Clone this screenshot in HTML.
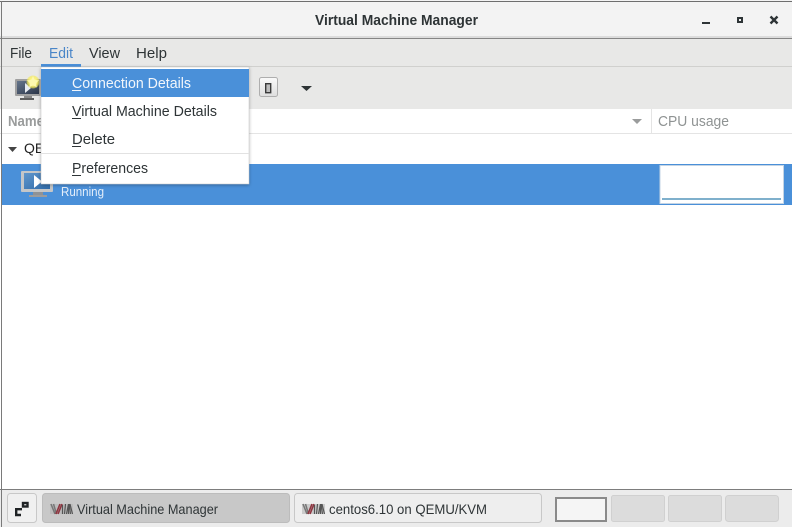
<!DOCTYPE html>
<html><head><meta charset="utf-8"><style>
html,body{margin:0;padding:0;background:#fff;width:792px;height:527px;overflow:hidden}
svg{display:block}
text{font-family:"Liberation Sans",sans-serif;font-size:15px}
</style></head><body>
<svg width="792" height="527" viewBox="0 0 792 527" xmlns="http://www.w3.org/2000/svg">
<defs>
<linearGradient id="scr" x1="0" y1="0" x2="1" y2="1"><stop offset="0" stop-color="#5f96cc"/><stop offset="1" stop-color="#2f6aa8"/></linearGradient>
<linearGradient id="scr2" x1="0" y1="0" x2="1" y2="1"><stop offset="0" stop-color="#66768c"/><stop offset="1" stop-color="#2b3548"/></linearGradient>
<linearGradient id="btn" x1="0" y1="0" x2="0" y2="1"><stop offset="0" stop-color="#fafafa"/><stop offset="1" stop-color="#dedede"/></linearGradient>
<radialGradient id="glow"><stop offset="0" stop-color="#fffde0"/><stop offset=".6" stop-color="#fbf27a"/><stop offset="1" stop-color="#f3e84a" stop-opacity=".5"/></radialGradient>
<filter id="sh" x="-10%" y="-10%" width="120%" height="120%"><feDropShadow dx="0" dy="1" stdDeviation="1.500" flood-color="#000" flood-opacity=".3"/></filter>
<filter id="bl"><feGaussianBlur stdDeviation=".3"/></filter>
<g id="logo" filter="url(#bl)">
<rect x="0" y="0" width="23" height="10" fill="#b4b4b4" opacity=".6"/>
<path d="M1 0l4 10M3.500 0l3 10" stroke="#777" stroke-width="1.500" fill="none"/>
<path d="M6 10l4-10M8 10l4-10" stroke="#8f3540" stroke-width="1.600" fill="none"/>
<path d="M12.500 10V1M14.500 10l1-10M16.500 10l2-10M18.500 10V1M20.500 10l-1.500-10M22.500 10L20 0" stroke="#555" stroke-width="1.200" fill="none"/>
</g>
</defs>
<rect width="792" height="527" fill="#fff"/>
<!-- title -->
<rect x="0" y="0" width="792" height="36" fill="#f3f3f3"/>
<rect x="0" y="1" width="792" height="1" fill="#6e6e6e"/>
<rect x="0" y="36" width="792" height="2" fill="#dcdcdc"/>
<rect x="0" y="38" width="792" height="1" fill="#858585"/>
<text x="315" y="25" textLength="163" lengthAdjust="spacingAndGlyphs" font-weight="bold" fill="#2e3436">Virtual Machine Manager</text>
<rect x="702" y="22" width="8" height="2" fill="#2e3436"/>
<path d="M738 18h4v4h-4z" fill="none" stroke="#2e3436" stroke-width="2"/>
<path d="M770.500 16.500l7 7M777.500 16.500l-7 7" stroke="#2e3436" stroke-width="2.400" fill="none"/>
<!-- menubar + toolbar -->
<rect x="0" y="39" width="792" height="70" fill="#e8e8e7"/>
<rect x="0" y="66" width="792" height="1" fill="#d0d0ce"/>
<text x="10" y="58" textLength="22" lengthAdjust="spacingAndGlyphs" fill="#2e3436">File</text>
<text x="49" y="58" textLength="24" lengthAdjust="spacingAndGlyphs" fill="#4a86c8">Edit</text>
<text x="89" y="58" textLength="31" lengthAdjust="spacingAndGlyphs" fill="#2e3436">View</text>
<text x="136" y="58" textLength="31" lengthAdjust="spacingAndGlyphs" fill="#2e3436">Help</text>
<rect x="41" y="64" width="40" height="3" fill="#4a90d9"/>
<!-- toolbar icons -->
<rect x="15" y="79" width="26" height="17" rx="1" fill="#a0a0a0"/>
<rect x="17" y="81" width="22" height="13" fill="url(#scr2)"/>
<path d="M25 83l6 5-6 5z" fill="#e8ecf2"/>
<rect x="24" y="96" width="8" height="2" fill="#8a8a8a"/>
<rect x="20" y="98" width="14" height="2" fill="#5e5e5e"/>
<circle cx="33" cy="82" r="6.500" fill="url(#glow)"/>
<path d="M33 76l1.800 4 4.200.4-3.200 2.800 1 4.200-3.800-2.200-3.800 2.200 1-4.200-3.200-2.800 4.200-.4z" fill="#fdf8b0"/>
<rect x="259.500" y="77.500" width="18" height="19" rx="2" fill="url(#btn)" stroke="#aeaeae"/>
<rect x="265.700" y="83.700" width="5" height="9" fill="#bdbdbd" stroke="#3a3a3a" stroke-width="1.400"/>
<path d="M301 86h11l-5.500 5z" fill="#2e3436"/>
<!-- header -->
<rect x="0" y="109" width="792" height="24" fill="#fff"/>
<rect x="0" y="133" width="792" height="1" fill="#e4e4e4"/>
<rect x="651" y="109" width="1" height="24" fill="#e4e4e4"/>
<text x="8" y="126" textLength="36" lengthAdjust="spacingAndGlyphs" font-weight="bold" fill="#9a9c9c">Name</text>
<path d="M632 119h10l-5 5z" fill="#9a9c9c"/>
<text x="658" y="126" textLength="71" lengthAdjust="spacingAndGlyphs" fill="#8f9393">CPU usage</text>
<!-- group row -->
<path d="M8 147h9l-4.500 5z" fill="#444"/>
<text x="24" y="153" fill="#222" style="font-size:14px">QEMU/KVM</text>
<!-- selected -->
<rect x="2" y="164" width="790" height="41" fill="#4a90d9"/>
<rect x="21" y="171" width="32" height="21" rx="1" fill="#c4c6c8"/>
<rect x="24" y="173" width="26" height="16" fill="url(#scr)"/>
<path d="M34 175l8 6.500-8 6.500z" fill="#fff"/>
<rect x="33" y="192" width="10" height="3" fill="#8f9296"/>
<rect x="29" y="195" width="18" height="2" fill="#9c9c9c"/>
<text x="61" y="196" textLength="43" lengthAdjust="spacingAndGlyphs" fill="#e4eefa" style="font-size:12.500px">Running</text>
<rect x="660" y="165.500" width="123.500" height="38" fill="#fff" stroke="#c4d4e4"/>
<rect x="662" y="198" width="119" height="2" fill="#7fb0cc"/>
<!-- left border -->
<rect x="1" y="1" width="1" height="526" fill="#7a7a7a"/>
<!-- menu -->
<rect x="41" y="67" width="208" height="117" fill="#fff" stroke="#c4c4c4" stroke-width=".5" filter="url(#sh)"/>
<rect x="41" y="69" width="208" height="28" fill="#4a90d9"/>
<text x="72" y="88" textLength="119" lengthAdjust="spacingAndGlyphs" fill="#f2f6fb">Connection Details</text>
<rect x="72" y="90" width="9" height="1" fill="#f2f6fb"/>
<text x="72" y="116" textLength="145" lengthAdjust="spacingAndGlyphs" fill="#2e3436">Virtual Machine Details</text>
<rect x="72" y="118" width="9" height="1" fill="#2e3436"/>
<text x="72" y="144" textLength="43" lengthAdjust="spacingAndGlyphs" fill="#2e3436">Delete</text>
<rect x="72" y="146" width="9" height="1" fill="#2e3436"/>
<rect x="41" y="153" width="208" height="1" fill="#e2e2e2"/>
<text x="72" y="173" textLength="76" lengthAdjust="spacingAndGlyphs" fill="#2e3436">Preferences</text>
<rect x="72" y="175" width="9" height="1" fill="#2e3436"/>
<!-- taskbar -->
<rect x="0" y="489" width="792" height="38" fill="#ececec"/>
<rect x="0" y="489" width="792" height="1" fill="#7d7d7d"/>
<rect x="1" y="489" width="1" height="38" fill="#7a7a7a"/>
<rect x="7.500" y="493.500" width="29" height="29" rx="3" fill="#f0f0f0" stroke="#c8c8c8"/>
<rect x="23" y="503" width="4.500" height="3.500" fill="none" stroke="#1f2325" stroke-width="2.400"/>
<path d="M22 509.200h-5.800v6.800M15 515h6" fill="none" stroke="#1f2325" stroke-width="2.400"/>
<rect x="42.500" y="493.500" width="247" height="29" rx="3" fill="#c8c8c8" stroke="#bcbcbc"/>
<use href="#logo" x="50" y="504"/>
<text x="77" y="514" textLength="141" lengthAdjust="spacingAndGlyphs" fill="#2e3436" style="font-size:14px">Virtual Machine Manager</text>
<rect x="294.500" y="493.500" width="247" height="29" rx="3" fill="#eeeeee" stroke="#c8c8c8"/>
<use href="#logo" x="302" y="504"/>
<text x="329" y="514" textLength="158" lengthAdjust="spacingAndGlyphs" fill="#2e3436" style="font-size:14px">centos6.10 on QEMU/KVM</text>
<rect x="556" y="498" width="50" height="23" fill="#f5f5f5" stroke="#8a8a8a" stroke-width="2"/>
<rect x="611.500" y="495.500" width="53" height="26" rx="2" fill="#dcdcdc" stroke="#d0d0d0"/>
<rect x="668.500" y="495.500" width="53" height="26" rx="2" fill="#dcdcdc" stroke="#d0d0d0"/>
<rect x="725.500" y="495.500" width="53" height="26" rx="3" fill="#dcdcdc" stroke="#d0d0d0"/>
</svg>
</body></html>
